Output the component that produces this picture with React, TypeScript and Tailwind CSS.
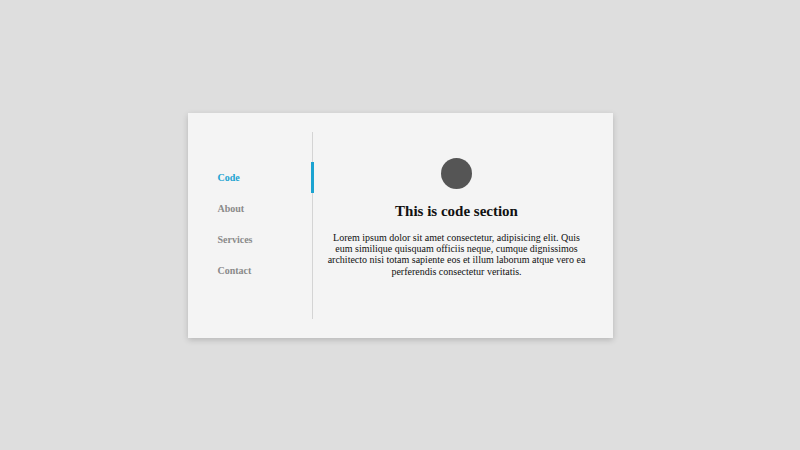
const NAV = ["Code", "About", "Services", "Contact"];

export default function App() {
  const active = "Code";

  return (
    <div className="flex h-[450px] w-full items-center justify-center bg-[#dedede] font-['Liberation_Serif',serif]">
      <div className="flex h-[225px] w-[425px] bg-[#f4f4f4] py-[19px] shadow-[0_2px_6px_rgba(0,0,0,0.18)]">
        {/* sidebar */}
        <div className="w-[125px] shrink-0 border-r border-[#d4d4d4] pt-[30px]">
          {NAV.map((n) => (
            <div key={n} className="relative flex h-[31px] items-center pl-[30px]">
              <span
                className={`text-[10px] font-bold ${
                  n === active ? "text-[#1ba3d1]" : "text-[#8a8a8a]"
                }`}
              >
                {n}
              </span>
              {n === active && (
                <span className="absolute right-[-2px] top-0 h-full w-[3px] bg-[#1ba3d1]" />
              )}
            </div>
          ))}
        </div>

        {/* content */}
        <div className="flex flex-1 flex-col items-center pr-[12px] pt-[26px] text-[#111]">
          <div className="h-[31px] w-[31px] rounded-full bg-[#555]" />
          <h2 className="mt-[14px] text-[15px] font-bold leading-[17px]">This is code section</h2>
          <p className="mt-[12px] w-[262px] text-center text-[10px] leading-[11.4px]">
            Lorem ipsum dolor sit amet consectetur, adipisicing elit. Quis eum similique quisquam
            officiis neque, cumque dignissimos architecto nisi totam sapiente eos et illum laborum
            atque vero ea perferendis consectetur veritatis.
          </p>
        </div>
      </div>
    </div>
  );
}
